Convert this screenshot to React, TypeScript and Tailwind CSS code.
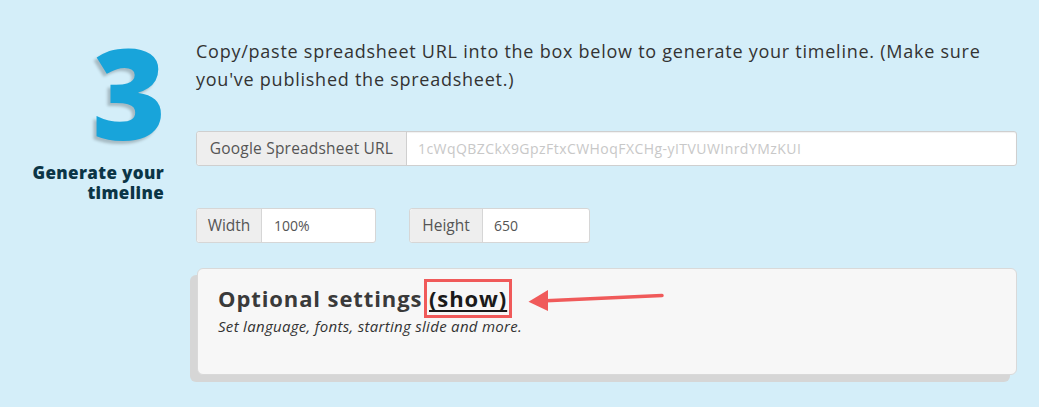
import React from "react";

const sans = "font-['Open_Sans','Liberation_Sans',sans-serif]";

export default function App() {
  return (
    <div className={`w-[1039px] h-[407px] overflow-hidden bg-[#d4eef9] flex ${sans}`}>
      {/* Schritt-Nummer links */}
      <div className="w-[164px] shrink-0 flex flex-col items-end text-right">
        <div className="mt-[28px] -mr-[2px] text-[126px] leading-none font-extrabold text-[#18a4da] [text-shadow:-3px_3px_3px_rgba(0,0,0,0.22)]">
          3
        </div>
        <div className="mt-[9px] text-[17px] leading-[20px] font-extrabold text-[#0b3546] tracking-[0.35px] whitespace-nowrap">
          Generate your
          <br />
          timeline
        </div>
      </div>

      {/* Formular rechts */}
      <div className="ml-[32px] w-[821px] pt-[37px]">
        <p className="text-[18px] leading-[28px] text-[#333] tracking-[0.75px] whitespace-nowrap">
          Copy/paste spreadsheet URL into the box below to generate your timeline. (Make sure
          <br />
          you've published the spreadsheet.)
        </p>

        <div className="mt-[38px] flex h-[35px] rounded-[3px] border border-[#cfcfcf] bg-white shadow-[inset_0_1px_1px_rgba(0,0,0,0.06)]">
          <div className="w-[210px] shrink-0 flex items-center justify-center bg-[#eeeeee] border-r border-[#cfcfcf] text-[15.5px] text-[#555] tracking-[0.2px] rounded-l-[3px]">
            Google Spreadsheet URL
          </div>
          <div className="flex items-center pl-[11px] text-[14px] text-[#c8c8c8] tracking-[0.45px]">
            1cWqQBZCkX9GpzFtxCWHoqFXCHg-yITVUWInrdYMzKUI
          </div>
        </div>

        <div className="mt-[42px] flex gap-[33px]">
          <div className="flex h-[35px] w-[180px] rounded-[3px] border border-[#d6d6d6] bg-white">
            <div className="w-[65px] shrink-0 flex items-center justify-center bg-[#eeeeee] border-r border-[#d6d6d6] text-[15.5px] text-[#555] rounded-l-[3px]">
              Width
            </div>
            <div className="flex items-center pl-[12px] text-[14px] text-[#555]">100%</div>
          </div>
          <div className="flex h-[35px] w-[181px] rounded-[3px] border border-[#d6d6d6] bg-white">
            <div className="w-[73px] shrink-0 flex items-center justify-center bg-[#eeeeee] border-r border-[#d6d6d6] text-[15.5px] text-[#555] rounded-l-[3px]">
              Height
            </div>
            <div className="flex items-center pl-[11px] text-[14px] text-[#555]">650</div>
          </div>
        </div>

        {/* Optionale Einstellungen */}
        <div className="relative mt-[25px] ml-px h-[107px] rounded-[6px] border border-[#d9d9d9] bg-[#f7f7f7] shadow-[-7px_7px_0_#d6d6d6] pl-[20px] pt-[13px]">
          <div className="text-[22px] leading-[32px] font-bold text-[#3a3a3a] tracking-[0.9px] whitespace-nowrap">
            Optional settings{" "}
            <span className="relative text-[#1a1a1a] underline decoration-[1.5px] underline-offset-[3px]">
              (show)
              <span className="absolute -left-[5px] -right-[5px] -top-[4px] -bottom-[5px] border-[3.5px] border-[#f05a5a]" />
            </span>
          </div>
          <div className="mt-[2px] text-[15px] leading-[20px] italic text-[#333] tracking-[0.3px]">
            Set language, fonts, starting slide and more.
          </div>

          <svg
            className="absolute left-[330px] top-[20px]"
            width="136"
            height="24"
            viewBox="0 0 136 24"
          >
            <line x1="134" y1="6.5" x2="18" y2="11.8" stroke="#f05a5a" strokeWidth="3.5" strokeLinecap="round" />
            <polygon points="0.5,12.7 20,1 20,22" fill="#f05a5a" />
          </svg>
        </div>
      </div>
    </div>
  );
}
